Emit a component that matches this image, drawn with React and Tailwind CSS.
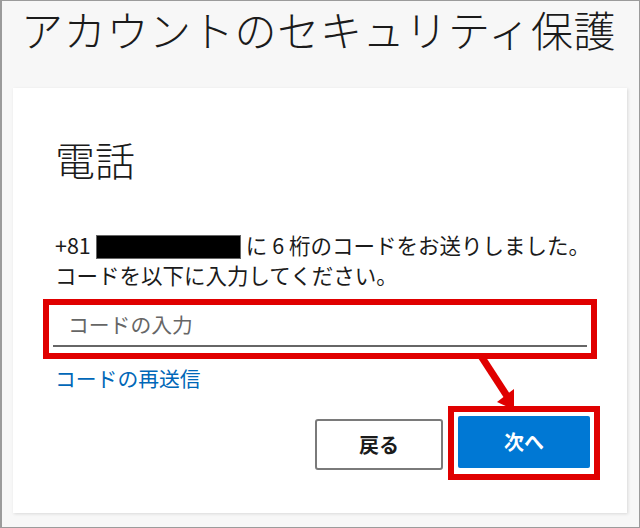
import React from 'react';

const jp = { fontFamily: '"Segoe UI", "Noto Sans CJK JP", "Noto Sans", sans-serif' };

export default function App() {
    return (
        <div className="w-[640px] h-[528px] bg-[#f7f7f7] border-y border-r border-l-2 border-[#9b9b9b] text-[#1b1b1b]" style={jp}>
            {/* Title */}
            <h1 className="pl-[19px] pt-[2px] text-[42px] leading-[52px] font-light tracking-[0.7px]">
                アカウントのセキュリティ保護
            </h1>

            {/* Card */}
            <div className="relative mt-[33px] ml-[11px] w-[614px] h-[425px] bg-white shadow-[1px_1px_3px_rgba(0,0,0,0.12)]">
                <div className="pt-[43px] pl-[42px] text-[40px] leading-[56px] font-light">電話</div>

                <p className="mt-[43px] pl-[42px] pr-[20px] text-[21.5px] leading-[30px] text-[#1b1b1b] whitespace-nowrap">
                    +81<span className="inline-block align-[-5px] w-[145px] h-[24px] bg-black border border-[#666] mx-[5px]" />に 6 桁のコードをお送りしました。
                    <br />
                    コードを以下に入力してください。
                </p>

                {/* Input with annotation box */}
                <div className="ml-[30px] mt-[9px] w-[554px] h-[60px] border-[6px] border-[#e00000] px-[4px] pt-[4px]">
                    <div className="h-[38px] border-b-2 border-[#666] pl-[15px] text-[20.8px] leading-[30px] text-[#666]">
                        コードの入力
                    </div>
                </div>

                <div className="pl-[42px] mt-[6px] text-[20.8px] leading-[26px] text-[#0067b8]">コードの再送信</div>

                {/* Buttons */}
                <div className="flex justify-end items-center pr-[27px] mt-[15px]">
                    <button className="w-[128px] h-[51px] mt-[3px] border-2 border-[#7a7a7a] rounded-[3px] bg-white text-[20px] font-bold text-[#1b1b1b]">
                        戻る
                    </button>
                    <div className="ml-[5px] w-[152px] h-[74px] border-[6px] border-[#e00000] p-[4px] bg-white">
                        <button className="w-full h-[52px] rounded-[2px] bg-[#0078d4] text-white text-[20px] font-bold">
                            次へ
                        </button>
                    </div>
                </div>

                {/* Annotation arrow */}
                <svg className="absolute left-0 top-0 pointer-events-none" width="614" height="425">
                    <line x1="468" y1="268" x2="494" y2="308" stroke="#e00000" strokeWidth="7" />
                    <polygon points="484,314 501,301 501,322" fill="#e00000" />
                </svg>
            </div>
        </div>
    );
}
